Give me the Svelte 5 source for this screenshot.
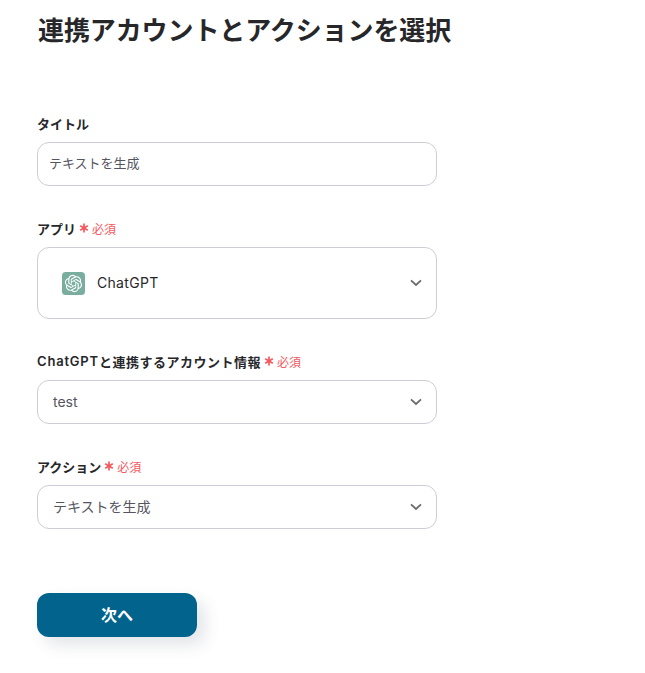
<script>
  let title = "テキストを生成";
  const selects = [
    { brand: "ChatGPT", label: "と連携するアカウント情報", value: "test", wide: true },
    { brand: "", label: "アクション", value: "テキストを生成", wide: false }
  ];
</script>

{#snippet required()}
  <span class="req">
    <svg class="star" viewBox="0 0 10 10" width="10" height="10">
      <path d="M5 .6v8.8M1.2 2.8l7.6 4.4M8.8 2.8 1.2 7.2" stroke="#f4595f" stroke-width="1.7" fill="none" />
    </svg>
    必須
  </span>
{/snippet}

{#snippet chevron()}
  <svg class="chevron" viewBox="0 0 12 8" width="12" height="8"><path d="M1 1.4 6 6l5-4.6" fill="none" stroke="#6b6b70" stroke-width="1.8" /></svg>
{/snippet}

<main class="page">
  <h1 class="heading">連携アカウントとアクションを選択</h1>

  <div class="field first">
    <div class="label">タイトル</div>
    <input class="box text-input" bind:value={title} />
  </div>

  <div class="field">
    <div class="label">アプリ{@render required()}</div>
    <div class="box select app">
      <svg class="logo" viewBox="0 0 24 24" width="23" height="23">
        <rect x="0" y="0" width="24" height="24" rx="4" fill="#79ad9f" />
        <g transform="translate(3 3) scale(0.75)">
          <path fill="#fff" d="M22.282 9.821a5.985 5.985 0 0 0-.516-4.91 6.046 6.046 0 0 0-6.51-2.9A6.065 6.065 0 0 0 4.981 4.18a5.985 5.985 0 0 0-3.998 2.9 6.046 6.046 0 0 0 .743 7.097 5.98 5.98 0 0 0 .51 4.911 6.051 6.051 0 0 0 6.515 2.9A5.985 5.985 0 0 0 13.26 24a6.056 6.056 0 0 0 5.772-4.206 5.99 5.99 0 0 0 3.997-2.9 6.056 6.056 0 0 0-.747-7.073zM13.26 22.43a4.476 4.476 0 0 1-2.876-1.04l.141-.081 4.779-2.758a.795.795 0 0 0 .392-.681v-6.737l2.02 1.168a.071.071 0 0 1 .038.052v5.583a4.504 4.504 0 0 1-4.494 4.494zM3.6 18.304a4.47 4.47 0 0 1-.535-3.014l.142.085 4.783 2.759a.771.771 0 0 0 .78 0l5.843-3.369v2.332a.08.08 0 0 1-.033.062L9.74 19.95a4.5 4.5 0 0 1-6.14-1.646zM2.34 7.896a4.485 4.485 0 0 1 2.366-1.973V11.6a.766.766 0 0 0 .388.676l5.815 3.355-2.02 1.168a.076.076 0 0 1-.071 0l-4.83-2.786A4.504 4.504 0 0 1 2.34 7.872zm16.597 3.855l-5.833-3.387L15.119 7.2a.076.076 0 0 1 .071 0l4.83 2.791a4.494 4.494 0 0 1-.676 8.105v-5.678a.79.79 0 0 0-.407-.667zm2.01-3.023l-.141-.085-4.774-2.782a.776.776 0 0 0-.785 0L9.409 9.23V6.897a.066.066 0 0 1 .028-.061l4.83-2.787a4.5 4.5 0 0 1 6.68 4.66zm-12.64 4.135l-2.02-1.164a.08.08 0 0 1-.038-.057V6.075a4.5 4.5 0 0 1 7.375-3.453l-.142.08L8.704 5.46a.795.795 0 0 0-.393.681zm1.097-2.365l2.602-1.5 2.607 1.5v2.999l-2.597 1.5-2.607-1.5z" />
        </g>
      </svg>
      <span class="app-name">ChatGPT</span>
      {@render chevron()}
    </div>
  </div>

  {#each selects as s}
    <div class="field">
      <div class="label" class:wide={s.wide}><span class="brand">{s.brand}</span>{s.label}{@render required()}</div>
      <div class="box select">
        <span class="value">{s.value}</span>
        {@render chevron()}
      </div>
    </div>
  {/each}

  <button class="next">次へ</button>
</main>

<style>
  :global(body) {
    background: #fff;
  }

  .page {
    box-sizing: border-box;
    height: 673px;
    padding: 13px 0 0 37px;
    overflow: hidden;
    font-family: Inter, "Noto Sans CJK JP", sans-serif;
    color: #27272a;
  }

  .heading {
    margin: 0 0 0 1px;
    font-size: 26px;
    line-height: 36px;
    font-weight: 600;
    letter-spacing: -0.1px;
    color: #27272a;
  }

  .field {
    width: 400px;
    margin-top: 32px;
  }

  .field.first {
    margin-top: 64px;
  }

  .label {
    display: flex;
    align-items: center;
    height: 20px;
    margin-bottom: 9px;
    font-size: 13px;
    font-weight: 600;
  }

  .label.wide {
    letter-spacing: 0.5px;
  }

  .brand {
    letter-spacing: 0.8px;
  }

  .req {
    display: flex;
    align-items: center;
    margin-left: 3px;
    font-size: 12px;
    font-weight: 400;
    letter-spacing: 0;
    color: #f4595f;
  }

  .star {
    margin-right: 3px;
  }

  .box {
    box-sizing: border-box;
    width: 400px;
    height: 44px;
    border: 1px solid #cdcdd8;
    border-radius: 12px;
    background: #fff;
    font-family: inherit;
    font-size: 14px;
    color: #55555f;
  }

  .text-input {
    display: block;
    padding: 0 11px 4px;
    font-size: 13px;
    outline: none;
  }

  .select {
    display: flex;
    align-items: center;
    padding: 0 14px 0 15px;
  }

  .value {
    padding-bottom: 2px;
  }

  .app {
    height: 72px;
    padding-left: 24px;
    color: #27272a;
  }

  .logo {
    flex: none;
  }

  .app-name {
    margin-left: 12px;
    padding-bottom: 2px;
    letter-spacing: 0.3px;
  }

  .chevron {
    margin-left: auto;
  }

  .next {
    display: block;
    width: 160px;
    height: 44px;
    margin-top: 64px;
    padding: 0 0 2px;
    border: none;
    border-radius: 12px;
    background: #02648c;
    color: #fff;
    font-family: inherit;
    font-size: 16px;
    font-weight: 700;
    box-shadow: 8px 8px 16px rgba(60, 70, 100, 0.14);
  }
</style>
